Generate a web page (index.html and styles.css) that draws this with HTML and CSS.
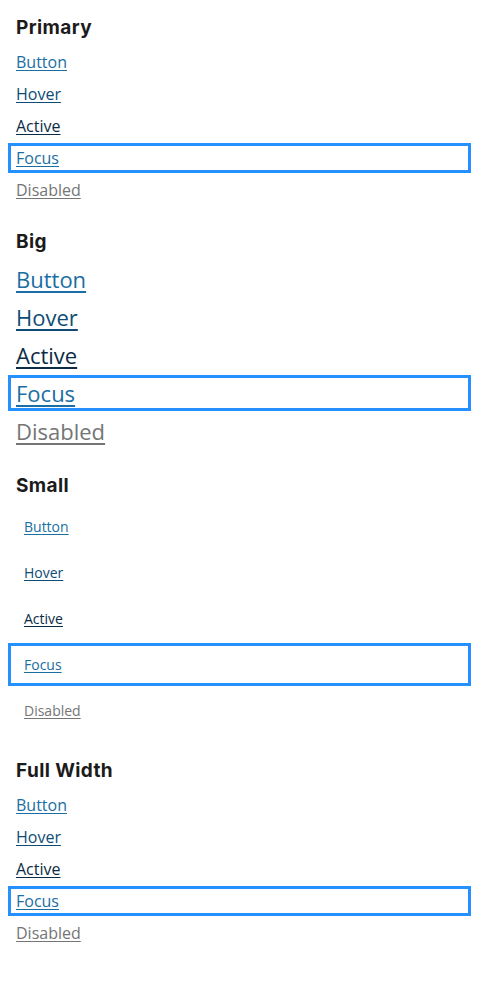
FILE: index.html
```html
<!DOCTYPE html>
<html lang="en">
<head>
<meta charset="utf-8">
<title>Link buttons</title>
<link rel="stylesheet" href="styles.css">
</head>
<body>
<section class="group">
  <h2 class="title">Primary</h2>
  <div class="list">
    <a class="btn" href="#">Button</a>
    <a class="btn hover" href="#">Hover</a>
    <a class="btn active" href="#">Active</a>
    <a class="btn focus" href="#">Focus</a>
    <a class="btn disabled" href="#">Disabled</a>
  </div>
</section>
<section class="group">
  <h2 class="title">Big</h2>
  <div class="list">
    <a class="btn big" href="#">Button</a>
    <a class="btn big hover" href="#">Hover</a>
    <a class="btn big active" href="#">Active</a>
    <a class="btn big focus" href="#">Focus</a>
    <a class="btn big disabled" href="#">Disabled</a>
  </div>
</section>
<section class="group group-small">
  <h2 class="title">Small</h2>
  <div class="list small-list">
    <a class="btn small" href="#">Button</a>
    <a class="btn small hover" href="#">Hover</a>
    <a class="btn small active" href="#">Active</a>
    <a class="btn small focus" href="#">Focus</a>
    <a class="btn small disabled" href="#">Disabled</a>
  </div>
</section>
<section class="group">
  <h2 class="title">Full Width</h2>
  <div class="list">
    <a class="btn" href="#">Button</a>
    <a class="btn hover" href="#">Hover</a>
    <a class="btn active" href="#">Active</a>
    <a class="btn focus" href="#">Focus</a>
    <a class="btn disabled" href="#">Disabled</a>
  </div>
</section>
</body>
</html>
```
FILE: styles.css
```css
html, body {
  background: #ffffff;
}
body {
  margin: 0;
  padding: 12px 16px;
  font-family: "Open Sans", "Noto Sans", sans-serif;
}
.group {
  display: flex;
  flex-direction: column;
  gap: 8px;
  margin-bottom: 24px;
}
.group-small {
  margin-bottom: 26px;
}
.title {
  margin: 2px 0 0;
  font-family: "Inter", "Open Sans", sans-serif;
  font-weight: 700;
  font-size: 19px;
  letter-spacing: 0.4px;
  line-height: 28px;
  color: #1b1b1b;
}
.list {
  display: flex;
  flex-direction: column;
  gap: 8px;
}
.small-list {
  gap: 9px;
}
.btn {
  display: block;
  margin: 0 -5px;
  padding: 0 5px;
  font-size: 16px;
  line-height: 24px;
  color: #1a6ea3;
  text-decoration: underline;
  text-underline-offset: 2px;
}
.btn.big {
  font-size: 22px;
  line-height: 30px;
  text-decoration-thickness: 2px;
  text-underline-offset: 3px;
}
.btn.small {
  font-size: 14px;
  line-height: 21px;
  padding: 8px 13px;
}
.hover { color: #0e4c75; }
.active { color: #0b2c45; }
.focus {
  outline: 3px solid #2590ff;
  outline-offset: 0;
}
.disabled { color: #757575; }
```
